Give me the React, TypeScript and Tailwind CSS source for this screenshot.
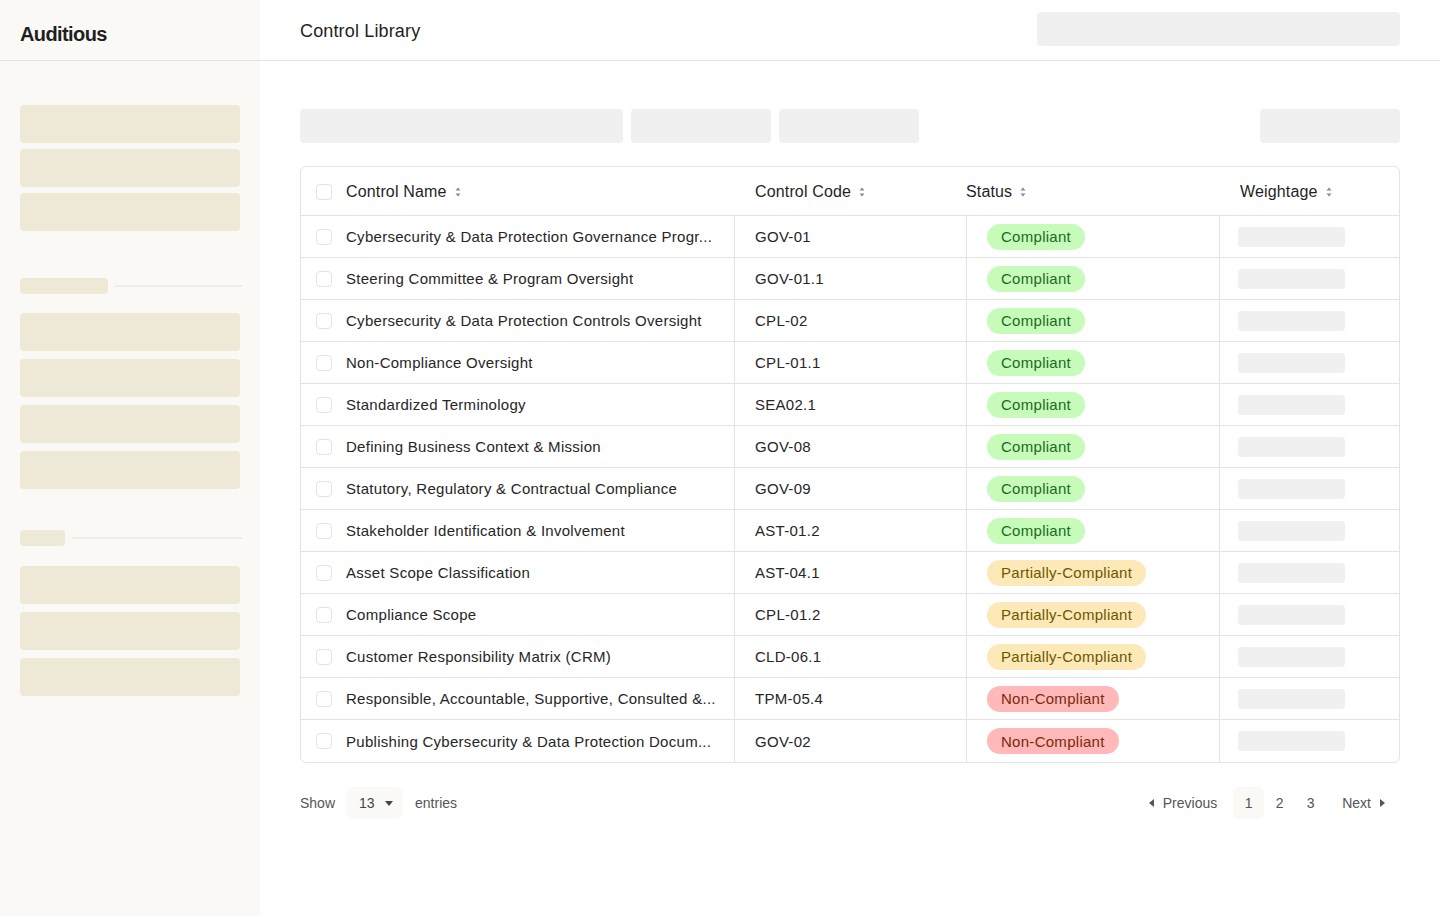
import React from 'react';

type Status = 'Compliant' | 'Partially-Compliant' | 'Non-Compliant';

const controls: { name: string; code: string; status: Status }[] = [
  { name: 'Cybersecurity & Data Protection Governance Progr...', code: 'GOV-01', status: 'Compliant' },
  { name: 'Steering Committee & Program Oversight', code: 'GOV-01.1', status: 'Compliant' },
  { name: 'Cybersecurity & Data Protection Controls Oversight', code: 'CPL-02', status: 'Compliant' },
  { name: 'Non-Compliance Oversight', code: 'CPL-01.1', status: 'Compliant' },
  { name: 'Standardized Terminology', code: 'SEA02.1', status: 'Compliant' },
  { name: 'Defining Business Context & Mission', code: 'GOV-08', status: 'Compliant' },
  { name: 'Statutory, Regulatory & Contractual Compliance', code: 'GOV-09', status: 'Compliant' },
  { name: 'Stakeholder Identification & Involvement', code: 'AST-01.2', status: 'Compliant' },
  { name: 'Asset Scope Classification', code: 'AST-04.1', status: 'Partially-Compliant' },
  { name: 'Compliance Scope', code: 'CPL-01.2', status: 'Partially-Compliant' },
  { name: 'Customer Responsibility Matrix (CRM)', code: 'CLD-06.1', status: 'Partially-Compliant' },
  { name: 'Responsible, Accountable, Supportive, Consulted &...', code: 'TPM-05.4', status: 'Non-Compliant' },
  { name: 'Publishing Cybersecurity & Data Protection Docum...', code: 'GOV-02', status: 'Non-Compliant' },
];

const pillStyles: Record<Status, string> = {
  Compliant: 'bg-[#c6fbb9] text-[#1b6b1f]',
  'Partially-Compliant': 'bg-[#fde8b8] text-[#6b5800]',
  'Non-Compliant': 'bg-[#ffb9b9] text-[#7a2a0a]',
};

// Tiny up/down caret used in the table header
function SortIcon() {
  return (
    <svg width="6" height="10" viewBox="0 0 6 10" className="ml-2 text-[#8a8a8a]" fill="currentColor">
      <path d="M3 0.5 L5.5 3.5 H0.5 Z" />
      <path d="M3 9.5 L0.5 6.5 H5.5 Z" />
    </svg>
  );
}

function Checkbox() {
  return <span className="block h-4 w-4 shrink-0 rounded-[4px] border border-[#e3e3e3] bg-white" />;
}

function Caret({ dir }: { dir: 'left' | 'right' | 'down' }) {
  if (dir === 'down') {
    return (
      <svg width="8" height="5" viewBox="0 0 8 5" fill="currentColor">
        <path d="M0 0 H8 L4 5 Z" />
      </svg>
    );
  }
  return (
    <svg width="5" height="8" viewBox="0 0 5 8" fill="currentColor">
      {dir === 'left' ? <path d="M5 0 V8 L0 4 Z" /> : <path d="M0 0 V8 L5 4 Z" />}
    </svg>
  );
}

function SideGroup({ count, gap }: { count: number; gap: string }) {
  return (
    <div className={`flex flex-col ${gap}`}>
      {Array.from({ length: count }).map((_, i) => (
        <div key={i} className="h-[38px] rounded-[4px] bg-[#eee8d7]" />
      ))}
    </div>
  );
}

function SideLabel({ width }: { width: string }) {
  return (
    <div className="flex items-center gap-[7px]">
      <div className={`h-4 rounded-[4px] bg-[#eee8d7] ${width}`} />
      <div className="h-[2px] flex-1 bg-[#ededed]" />
    </div>
  );
}

export default function App() {
  return (
    <div
      className="flex h-[916px] w-[1440px] overflow-hidden bg-white text-[#262626]"
      style={{ fontFamily: '"Liberation Sans", Arial, sans-serif' }}
    >
      {/* Sidebar */}
      <aside className="flex w-[260px] shrink-0 flex-col bg-[#faf9f6]">
        <div className="flex h-[61px] items-center border-b border-[#e2e2e2] px-5 pt-[8px]">
          <span className="text-[20px] font-bold tracking-[-0.6px] text-[#1f1f1f]">Auditious</span>
        </div>
        <div className="flex flex-col pl-5 pr-[18px] pt-[44px]">
          <div className="pr-[2px]">
            <SideGroup count={3} gap="gap-[6px]" />
          </div>
          <div className="mt-[47px]">
            <SideLabel width="w-[88px]" />
          </div>
          <div className="mt-[19px] pr-[2px]">
            <SideGroup count={4} gap="gap-2" />
          </div>
          <div className="mt-[41px]">
            <SideLabel width="w-[45px]" />
          </div>
          <div className="mt-5 pr-[2px]">
            <SideGroup count={3} gap="gap-2" />
          </div>
        </div>
      </aside>

      {/* Main */}
      <main className="flex flex-1 flex-col">
        <header className="flex h-[61px] items-center justify-between border-b border-[#e2e2e2] px-10">
          <h1 className="pt-[2px] text-[18px] font-medium tracking-[0.15px] text-[#1f1f1f]">Control Library</h1>
          <div className="mb-[2px] h-[34px] w-[363px] rounded-[4px] bg-[#f0f0f0]" />
        </header>

        <div className="flex flex-col px-10 pt-12">
          {/* Toolbar skeletons */}
          <div className="flex items-center">
            <div className="h-[34px] w-[323px] rounded-[4px] bg-[#f0f0f0]" />
            <div className="ml-2 h-[34px] w-[140px] rounded-[4px] bg-[#f0f0f0]" />
            <div className="ml-2 h-[34px] w-[140px] rounded-[4px] bg-[#f0f0f0]" />
            <div className="ml-auto h-[34px] w-[140px] rounded-[4px] bg-[#f0f0f0]" />
          </div>

          {/* Table */}
          <div className="mt-[23px] overflow-hidden rounded-[6px] border border-[#e3e3e3]">
            <div className="grid h-[49px] grid-cols-[434px_232px_253px_179px] items-center border-b border-[#e3e3e3] pt-[1px] text-[16px] font-medium tracking-[0.15px] text-[#1f1f1f]">
              <div className="flex items-center gap-[14px] pl-[15px]">
                <Checkbox />
                <span className="flex items-center">Control Name<SortIcon /></span>
              </div>
              <div className="flex items-center pl-5">Control Code<SortIcon /></div>
              <div className="-ml-px flex items-center">Status<SortIcon /></div>
              <div className="flex items-center pl-5">Weightage<SortIcon /></div>
            </div>
            {controls.map((c, i) => (
              <div
                key={c.code + i}
                className={`grid h-[42px] grid-cols-[434px_232px_253px_179px] text-[15px] tracking-[0.28px] ${
                  i < controls.length - 1 ? 'border-b border-[#e3e3e3]' : ''
                }`}
              >
                <div className="flex min-w-0 items-center gap-[14px] border-r border-[#e3e3e3] pl-[15px] pr-4">
                  <Checkbox />
                  <span className="truncate pt-[2px]">{c.name}</span>
                </div>
                <div className="flex items-center border-r border-[#e3e3e3] pl-5 pt-[2px]">{c.code}</div>
                <div className="flex items-center border-r border-[#e3e3e3] pl-5">
                  <span className={`flex h-[26px] items-center rounded-full px-[14px] pt-[2px] ${pillStyles[c.status]}`}>
                    {c.status}
                  </span>
                </div>
                <div className="flex items-center pl-[18px]">
                  <div className="h-5 w-[107px] rounded-[4px] bg-[#f0f0f0]" />
                </div>
              </div>
            ))}
          </div>

          {/* Footer */}
          <div className="mt-6 flex items-center text-[14px] text-[#555555]">
            <span>Show</span>
            <div className="ml-[12px] flex h-8 w-[56px] items-center gap-[10px] rounded-[6px] bg-[#faf9f6] pl-3 text-[#444444]">
              <span>13</span>
              <Caret dir="down" />
            </div>
            <span className="ml-3">entries</span>

            <div className="ml-auto flex items-center pr-[15px]">
              <div className="flex items-center gap-[9px] text-[#555555]">
                <Caret dir="left" />
                <span>Previous</span>
              </div>
              <div className="ml-4 flex items-center">
                <span className="flex h-8 w-[31px] items-center justify-center rounded-[6px] bg-[#faf9f6]">1</span>
                <span className="flex h-8 w-[31px] items-center justify-center">2</span>
                <span className="flex h-8 w-[31px] items-center justify-center">3</span>
              </div>
              <div className="ml-4 flex items-center gap-[9px]">
                <span>Next</span>
                <Caret dir="right" />
              </div>
            </div>
          </div>
        </div>
      </main>
    </div>
  );
}
